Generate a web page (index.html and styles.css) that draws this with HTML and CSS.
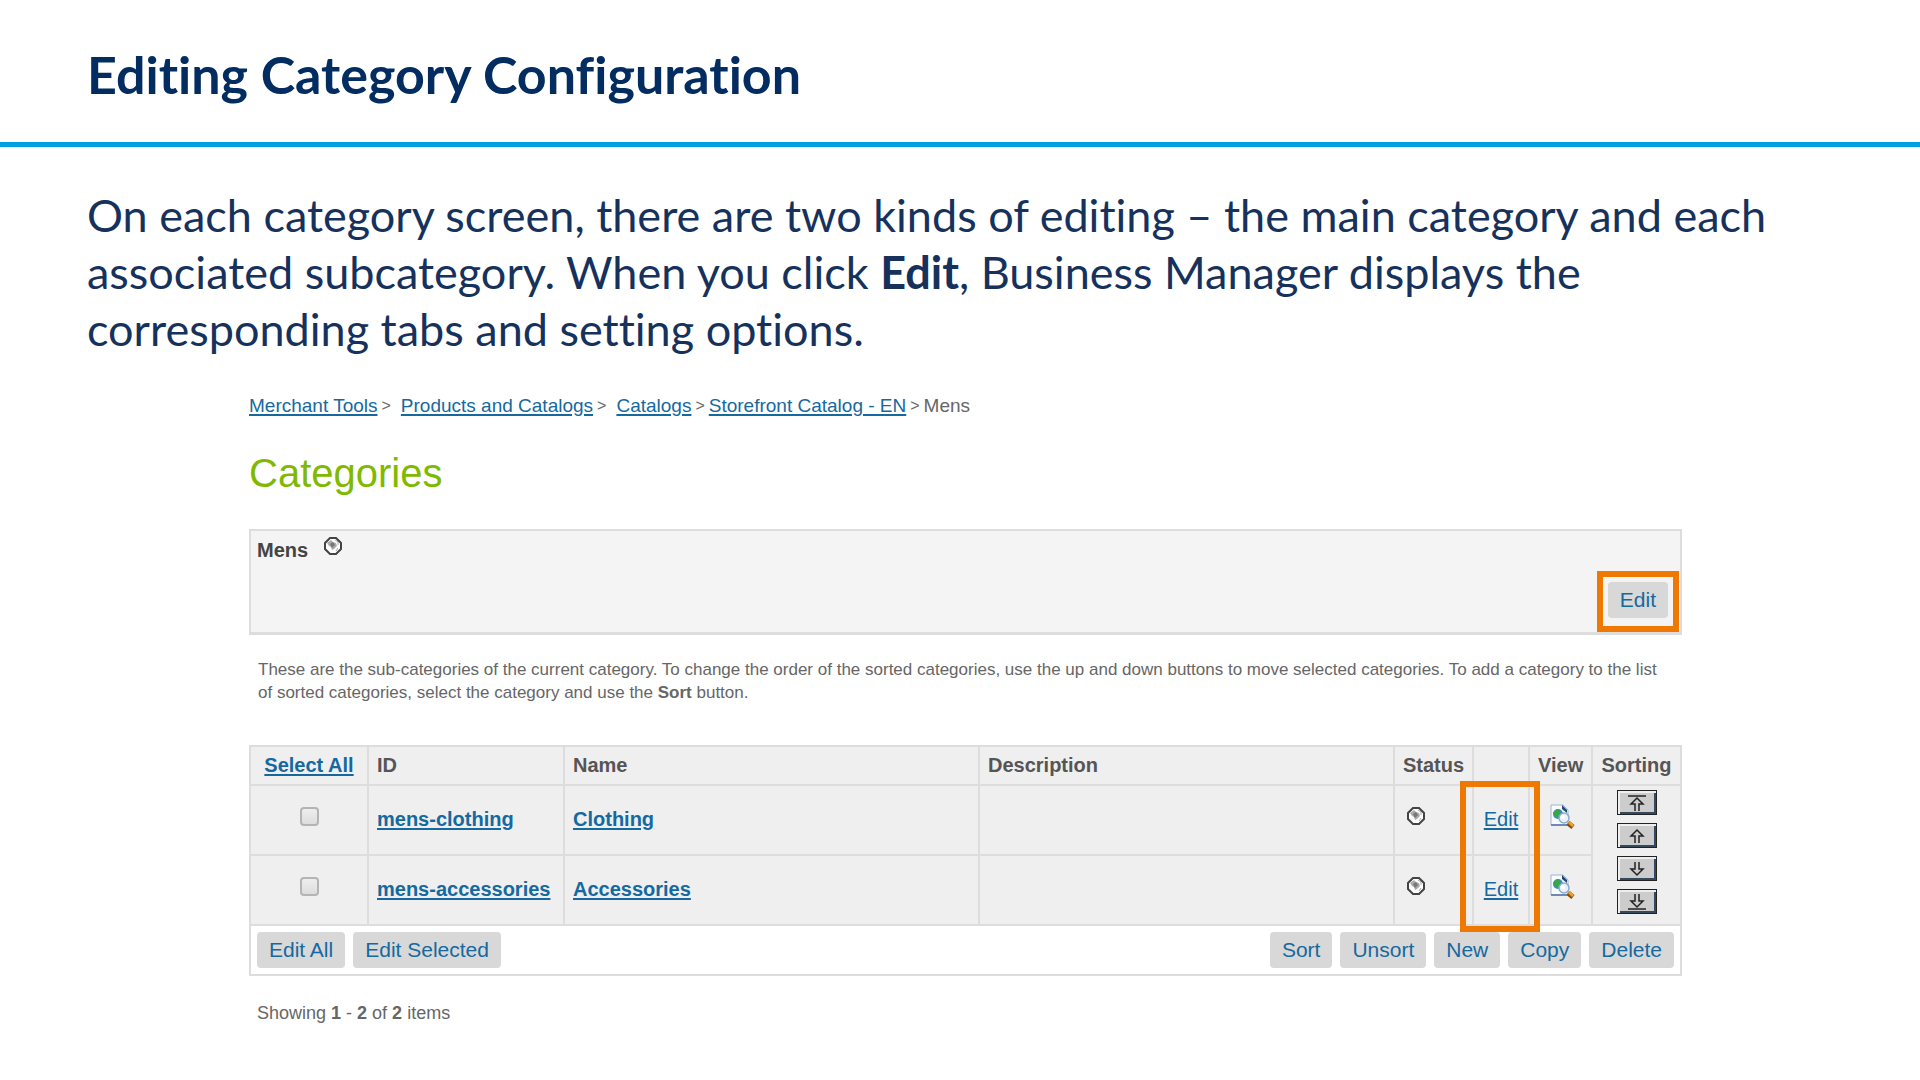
FILE: index.html
```html
<!DOCTYPE html>
<html lang="en">
<head>
    <meta charset="UTF-8" />
    <meta name="viewport" content="width=device-width, initial-scale=1" />
    <title>Editing Category Configuration</title>
    <link rel="stylesheet" href="styles.css">
</head>
<body>
    <!-- shared icons -->
    <svg class="sprite" aria-hidden="true">
        <symbol id="globe" viewBox="0 0 18 18">
            <path d="M6 1h6l5 5v6l-5 5H6l-5-5V6z" fill="#fff" stroke="#444" stroke-width="2" />
            <path d="M3 6l4-3 2 2 3 1 1 3-3 3-2 1-1-3-2-1z" fill="#aaa" />
            <path d="M6 7l3-2 2 3-3 3z" fill="#777" />
            <path d="M11 3l3 2v3M12 14l2-3" fill="none" stroke="#aaa" />
        </symbol>
        <symbol id="preview" viewBox="0 0 25 25">
            <path d="M1 1h12l5 5v15H1z" fill="#f8fbff" stroke="#9db4d6" />
            <path d="M1 21h16" stroke="#6f8ab5" stroke-width="2" />
            <path d="M12 1l5 5v3l-5-4z" fill="#24476f" />
            <circle cx="8" cy="10" r="5" fill="#3e86d0" />
            <path d="M3 9l4-4 4 2-2 3 1 3-4 1-2-3z" fill="#37a646" />
            <path d="M18 19l5 4" stroke="#8a4a08" stroke-width="5" />
            <path d="M19 18l4 4" stroke="#f0a030" stroke-width="3" />
            <circle cx="14" cy="14" r="5" fill="#e4f2ff" stroke="#8fa9c6" stroke-width="1.5" />
            <circle cx="13" cy="13" r="2" fill="#fff" />
        </symbol>
    </svg>

    <header class="slide-header">
        <h1>Editing Category Configuration</h1>
    </header>

    <p class="intro">On each category screen, there are two kinds of editing – the main category and each associated subcategory. When you click <b>Edit</b>, Business Manager displays the corresponding tabs and setting options.</p>

    <main class="manager">
        <nav class="breadcrumb">
            <a href="#">Merchant Tools</a><span class="sep wide">&gt;</span>
            <a href="#">Products and Catalogs</a><span class="sep wide">&gt;</span>
            <a href="#">Catalogs</a><span class="sep">&gt;</span>
            <a href="#">Storefront Catalog - EN</a><span class="sep">&gt;</span>
            <span>Mens</span>
        </nav>

        <h2>Categories</h2>

        <section class="panel">
            <div class="panel-title">Mens <svg class="globe"><use href="#globe" /></svg></div>
            <div class="edit-highlight"><button type="button" class="btn">Edit</button></div>
        </section>

        <p class="help">These are the sub-categories of the current category. To change the order of the sorted categories, use the up and down buttons to move selected categories. To add a category to the list of sorted categories, select the category and use the <b>Sort</b> button.</p>

        <div class="list">
            <table>
                <colgroup>
                    <col class="c-select"><col class="c-id"><col><col>
                    <col class="c-status"><col class="c-edit"><col class="c-view"><col class="c-sort">
                </colgroup>
                <thead>
                    <tr>
                        <th class="center"><a href="#">Select All</a></th>
                        <th>ID</th>
                        <th>Name</th>
                        <th>Description</th>
                        <th>Status</th>
                        <th></th>
                        <th>View</th>
                        <th class="center">Sorting</th>
                    </tr>
                </thead>
                <tbody>
                    <tr>
                        <td class="center raised"><input type="checkbox" aria-label="Select mens-clothing"></td>
                        <td><a class="strong" href="#">mens-clothing</a></td>
                        <td><a class="strong" href="#">Clothing</a></td>
                        <td></td>
                        <td class="raised status"><svg class="globe"><use href="#globe" /></svg></td>
                        <td class="center"><a href="#">Edit</a></td>
                        <td class="raised view"><a href="#" aria-label="View Clothing"><svg class="preview"><use href="#preview" /></svg></a></td>
                        <td rowspan="2" class="sorting">
                            <div class="sort-buttons">
                                <button type="button" aria-label="Move to top"><svg viewBox="0 0 18 18"><path d="M0 2h18M7 17v-7H3l6-6 6 6h-4v7" /></svg></button>
                                <button type="button" aria-label="Move up"><svg viewBox="0 0 18 18"><path d="M7 16V9H3l6-6 6 6h-4v7" /></svg></button>
                                <button type="button" aria-label="Move down"><svg viewBox="0 0 18 18"><path d="M7 2v7H3l6 6 6-6h-4V2" /></svg></button>
                                <button type="button" aria-label="Move to bottom"><svg viewBox="0 0 18 18"><path d="M0 16h18M7 1v7H3l6 6 6-6h-4V1" /></svg></button>
                            </div>
                        </td>
                    </tr>
                    <tr>
                        <td class="center raised"><input type="checkbox" aria-label="Select mens-accessories"></td>
                        <td><a class="strong" href="#">mens-accessories</a></td>
                        <td><a class="strong" href="#">Accessories</a></td>
                        <td></td>
                        <td class="raised status"><svg class="globe"><use href="#globe" /></svg></td>
                        <td class="center"><a href="#">Edit</a></td>
                        <td class="raised view"><a href="#" aria-label="View Accessories"><svg class="preview"><use href="#preview" /></svg></a></td>
                    </tr>
                </tbody>
            </table>
            <div class="column-highlight"></div>
            <div class="actions">
                <div class="left">
                    <button type="button" class="btn">Edit All</button>
                    <button type="button" class="btn">Edit Selected</button>
                </div>
                <div class="right">
                    <button type="button" class="btn">Sort</button>
                    <button type="button" class="btn">Unsort</button>
                    <button type="button" class="btn">New</button>
                    <button type="button" class="btn">Copy</button>
                    <button type="button" class="btn">Delete</button>
                </div>
            </div>
        </div>

        <p class="count">Showing <b>1</b> - <b>2</b> of <b>2</b> items</p>
    </main>
</body>
</html>
```
FILE: styles.css
```css
* {
    box-sizing: border-box;
}
body {
    margin: 0;
    background: #fff;
    font-family: "Liberation Sans", Arial, sans-serif;
    color: #666;
}
.sprite {
    display: none;
}
a {
    color: #15699f;
    text-decoration-thickness: 2px;
    text-underline-offset: 2px;
}
.slide-header {
    padding: 41px 87px 35px;
    border-bottom: 5px solid #009fdf;
}
h1 {
    margin: 0;
    font: bold 52px/66px Lato, Calibri, sans-serif;
    font-variant-ligatures: none;
    color: #032d60;
}
.intro {
    margin: 40px 120px 0 87px;
    font: 45px/57px Lato, Calibri, sans-serif;
    font-variant-ligatures: none;
    color: #16325c;
}
.manager {
    margin: 36px 238px 0 249px;
}
.breadcrumb {
    display: flex;
    font-size: 19px;
    line-height: 24px;
}
.sep {
    margin: 0 4px;
    font-size: 16px;
}
.sep.wide {
    margin-right: 10px;
}
h2 {
    margin: 31px 0 0;
    font-size: 40px;
    font-weight: normal;
    line-height: 48px;
    color: #7fba00;
}
.panel {
    margin-top: 32px;
    padding: 6px 1px 0 6px;
    border: 2px solid #ddd;
    border-bottom-width: 3px;
    background: #f4f4f4;
}
.panel-title {
    display: flex;
    gap: 16px;
    font-size: 20px;
    font-weight: bold;
    line-height: 26px;
    color: #444;
}
.globe {
    width: 18px;
    height: 18px;
}
.edit-highlight {
    width: max-content;
    margin: 8px 0 0 auto;
    padding: 5px 5px 8px;
    border: 6px solid #ee7800;
}
.btn {
    display: block;
    height: 36px;
    padding: 0 12px;
    border: 0;
    border-radius: 4px;
    background: #d8d8d8;
    font: 21px/36px "Liberation Sans", Arial, sans-serif;
    color: #15699f;
}
.help {
    margin: 23px 24px 0 9px;
    font-size: 17px;
    line-height: 23px;
}
.list {
    position: relative;
    margin-top: 41px;
}
table {
    width: 100%;
    table-layout: fixed;
    border-collapse: collapse;
    background: #efefef;
    font-size: 20px;
    line-height: 24px;
}
th, td {
    padding: 0 8px 2px;
    border: 2px solid #ddd;
    text-align: left;
    white-space: nowrap;
}
th {
    height: 39px;
    color: #555;
}
td {
    height: 70px;
}
.c-select {
    width: 118px;
}
.c-id {
    width: 196px;
}
.c-status {
    width: 79px;
}
.c-edit {
    width: 56px;
}
.c-view {
    width: 63px;
}
.c-sort {
    width: 89px;
}
.center {
    padding-right: 0;
    padding-left: 0;
    text-align: center;
}
.raised {
    padding-bottom: 8px;
}
.raised svg, .raised input {
    display: block;
    margin: 0 auto;
}
.status .globe {
    margin: 0 4px;
}
.view {
    padding-right: 4px;
}
.strong {
    font-weight: bold;
}
input[type="checkbox"] {
    appearance: none;
    width: 19px;
    height: 19px;
    border: 2px solid #b4b4b4;
    border-radius: 4px;
    background: linear-gradient(#eee, #ddd);
}
.preview {
    width: 25px;
    height: 25px;
}
.sorting {
    padding: 0 0 6px;
}
.sort-buttons {
    display: flex;
    flex-direction: column;
    align-items: center;
    gap: 8px;
}
.sort-buttons button {
    display: flex;
    justify-content: center;
    align-items: center;
    width: 40px;
    height: 25px;
    padding: 0;
    border: 1px solid #222;
    background: #ccc;
    box-shadow: inset 2px 2px #eee, inset -2px -2px #34495e;
}
.sort-buttons svg {
    width: 18px;
    height: 18px;
    fill: none;
    stroke: #222;
    stroke-width: 1.5;
}
.column-highlight {
    position: absolute;
    top: 36px;
    right: 142px;
    width: 80px;
    height: 151px;
    border: 6px solid #ee7800;
}
.actions {
    display: flex;
    justify-content: space-between;
    padding: 6px;
    border: 2px solid #ddd;
    border-top: 0;
}
.left, .right {
    display: flex;
    gap: 8px;
}
.count {
    margin: 25px 8px 0;
    font-size: 18px;
    line-height: 24px;
}
```
